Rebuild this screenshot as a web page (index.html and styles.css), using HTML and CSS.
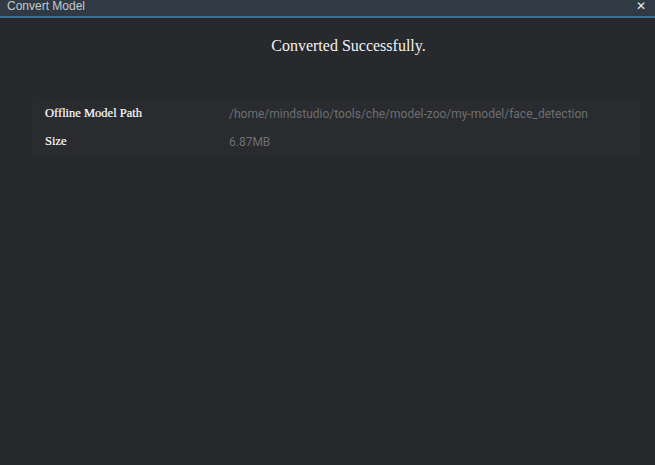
FILE: index.html
```html
<!DOCTYPE html>
<html>
<head>
<meta charset="utf-8">
<link rel="stylesheet" href="styles.css">
</head>
<body>
<div class="window">
  <div class="titlebar">
    <span class="title">Convert Model</span>
    <span class="close">✕</span>
  </div>
  <div class="content">
    <h1 class="heading">Converted Successfully.</h1>
    <table class="info">
      <tr>
        <td class="label">Offline Model Path</td>
        <td class="value">/home/mindstudio/tools/che/model-zoo/my-model/face_detection</td>
      </tr>
      <tr>
        <td class="label">Size</td>
        <td class="value">6.87MB</td>
      </tr>
    </table>
  </div>
</div>
</body>
</html>
```
FILE: styles.css
```css
html, body {
  margin: 0;
  padding: 0;
  background: #27292c;
}
.window {
  width: 655px;
  height: 465px;
  display: flex;
  flex-direction: column;
  background: #27292c;
}
.titlebar {
  height: 16px;
  background: #2f3a45;
  border-bottom: 2px solid #3e6d92;
  display: flex;
  align-items: flex-start;
  justify-content: space-between;
  padding: 0 9px 0 7px;
}
.title {
  font-family: "Liberation Sans", Arial, sans-serif;
  font-size: 12px;
  color: #c3c8cd;
  line-height: 12px;
}
.close {
  font-family: "DejaVu Sans", sans-serif;
  font-size: 12px;
  font-weight: bold;
  color: #e6e8ea;
  line-height: 12px;
}
.content {
  padding: 19px 15px 0 33px;
}
.heading {
  margin: 0;
  text-align: center;
  font-family: "Liberation Serif", "Times New Roman", serif;
  font-weight: normal;
  font-size: 16px;
  color: #f2f2f2;
  line-height: 18px;
  padding-left: 24px;
}
.info {
  margin-top: 43px;
  width: 607px;
  border-collapse: collapse;
  background: #292b2e;
}
.info td {
  height: 29px;
  padding: 0;
  vertical-align: middle;
}
.info tr:first-child td {
  padding-top: 1px;
}
.info tr + tr td {
  height: 27px;
}
.label {
  width: 184px;
  padding-left: 12px !important;
  font-family: "Liberation Serif", "Times New Roman", serif;
  font-size: 12.5px;
  font-weight: normal;
  color: #ffffff;
  -webkit-text-stroke: 0.2px #ffffff;
}
.value {
  font-family: Roboto, "Liberation Sans", sans-serif;
  font-size: 12px;
  color: #6d6f72;
}
```
